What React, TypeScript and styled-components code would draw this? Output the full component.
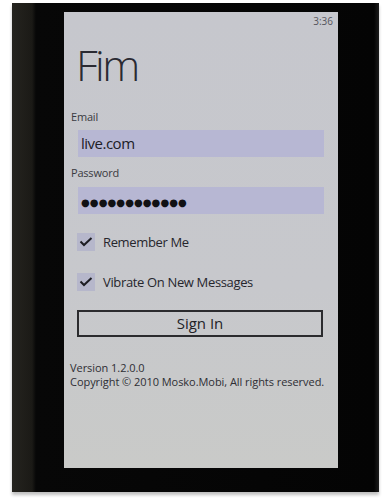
import React from "react";
import styled, { createGlobalStyle } from "styled-components";

const Global = createGlobalStyle`
  html, body { margin: 0; padding: 0; background: #ffffff; }
  body { width: 388px; height: 500px; overflow: hidden; font-family: "Open Sans", "Noto Sans", sans-serif; }
`;

const Page = styled.div`
  width: 388px;
  height: 500px;
  padding: 3px 9px 0 12px;
  box-sizing: border-box;
`;

const Phone = styled.div`
  width: 367px;
  height: 489px;
  box-sizing: border-box;
  padding: 9px 41px 24px 52px;
  background: linear-gradient(
    to right,
    #25241f 0px,
    #1b1a16 20px,
    #070707 24px,
    #040404 calc(100% - 5px),
    #1c1c1c 100%
  );
  box-shadow: 0 3px 3px rgba(0, 0, 0, 0.25);
`;

const Screen = styled.div`
  width: 274px;
  height: 456px;
  box-sizing: border-box;
  background: linear-gradient(to bottom, #c6c7cd 0%, #c7c8cc 60%, #c9cac8 100%);
  display: flex;
  flex-direction: column;
  padding: 0 14px 0 7px;
  color: #26262c;
  white-space: nowrap;
`;

const StatusBar = styled.div`
  margin-top: 3px;
  margin-right: -9px;
  height: 12px;
  font-size: 10px;
  line-height: 12px;
  text-align: right;
  color: #55555c;
`;

const Title = styled.div`
  margin-top: 13px;
  margin-left: 5px;
  height: 50px;
  font-size: 43px;
  line-height: 50px;
  font-weight: 300;
  letter-spacing: -2.5px;
  color: #2a2a32;
`;

const Label = styled.div<{ $gap: number }>`
  margin-top: ${(p) => p.$gap}px;
  height: 14px;
  font-size: 11px;
  line-height: 14px;
  letter-spacing: -0.2px;
  color: #3a3a40;
`;

const Field = styled.div<{ $gap: number }>`
  margin-top: ${(p) => p.$gap}px;
  margin-left: 7px;
  height: 27px;
  padding-left: 3px;
  background: #b7b7d3;
  font-size: 15px;
  line-height: 27px;
  letter-spacing: -0.5px;
  color: #202026;
`;

const Dots = styled.span`
  font-family: "DejaVu Sans", sans-serif;
  font-size: 10px;
  letter-spacing: 0.1px;
  color: #111114;
`;

const CheckRow = styled.div<{ $gap: number }>`
  margin-top: ${(p) => p.$gap}px;
  margin-left: 6px;
  height: 18px;
  display: flex;
  align-items: center;
  gap: 8px;
  font-size: 13px;
  line-height: 18px;
  letter-spacing: -0.35px;
  color: #26262c;
`;

const Box = styled.div`
  width: 18px;
  height: 18px;
  background: #b6b7cb;
  display: flex;
  align-items: center;
  justify-content: center;
`;

const Button = styled.div`
  margin-top: 19px;
  margin-left: 6px;
  margin-right: 1px;
  height: 27px;
  box-sizing: border-box;
  border: 2px solid #2b2b2e;
  font-size: 15px;
  line-height: 23px;
  text-align: center;
  color: #222226;
`;

const Footer = styled.div`
  margin-top: 24px;
  margin-left: -1px;
  font-size: 11px;
  line-height: 14px;
  letter-spacing: -0.05px;
  color: #2e2e34;
`;

const Check = () => (
  <svg width="14" height="10" viewBox="0 0 14 10">
    <polyline points="1.5,4.5 5,8 12.5,1" fill="none" stroke="#1e1e24" strokeWidth="2" />
  </svg>
);

export default function App() {
  return (
    <>
      <Global />
      <Page>
        <Phone>
          <Screen>
            <StatusBar>3:36</StatusBar>
            <Title>Fim</Title>
            <Label $gap={20}>Email</Label>
            <Field $gap={6}>live.com</Field>
            <Label $gap={9}>Password</Label>
            <Field $gap={7}>
              <Dots>●●●●●●●●●●●●</Dots>
            </Field>
            <CheckRow $gap={19}>
              <Box>
                <Check />
              </Box>
              Remember Me
            </CheckRow>
            <CheckRow $gap={22}>
              <Box>
                <Check />
              </Box>
              Vibrate On New Messages
            </CheckRow>
            <Button>Sign In</Button>
            <Footer>
              Version 1.2.0.0
              <br />
              Copyright © 2010 Mosko.Mobi, All rights reserved.
            </Footer>
          </Screen>
        </Phone>
      </Page>
    </>
  );
}
